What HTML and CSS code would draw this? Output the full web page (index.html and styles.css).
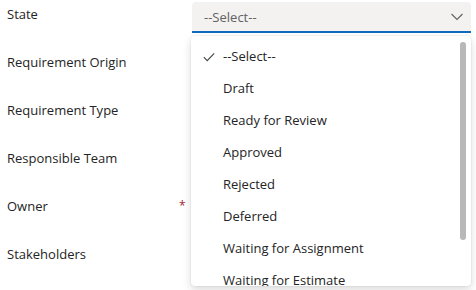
FILE: index.html
```html
<!DOCTYPE html>
<html>
<head>
    <title>Work item fields</title>
    <link rel="stylesheet" href="styles.css">
</head>
<body>
    <div class="form">
        <div class="row">
            <label class="label">State</label>
            <div class="field">
                <button class="select">
                    <span>--Select--</span>
                    <svg class="chevron" width="12" height="8" viewBox="0 0 12 8"><path d="M0.5 1 L6 6.5 L11.5 1" fill="none" stroke="#616161" stroke-width="1.1"/></svg>
                </button>
            </div>
        </div>
        <div class="row"><label class="label">Requirement Origin</label></div>
        <div class="row"><label class="label">Requirement Type</label></div>
        <div class="row"><label class="label">Responsible Team</label></div>
        <div class="row"><label class="label">Owner</label><span class="required">*</span></div>
        <div class="row"><label class="label">Stakeholders</label></div>

        <div class="listbox">
            <ul class="options">
                <li class="option selected">
                    <svg class="check" width="12" height="10" viewBox="0 0 12 10"><path d="M0.8 5.2 L4.2 8.6 L11.2 1.4" fill="none" stroke="#424242" stroke-width="1.1"/></svg>
                    --Select--
                </li>
                <li class="option">Draft</li>
                <li class="option">Ready for Review</li>
                <li class="option">Approved</li>
                <li class="option">Rejected</li>
                <li class="option">Deferred</li>
                <li class="option">Waiting for Assignment</li>
                <li class="option">Waiting for Estimate</li>
            </ul>
            <div class="scrollbar"></div>
        </div>
    </div>
</body>
</html>
```

FILE: styles.css
```css
body {
    font-family: "Segoe UI", "Open Sans", sans-serif;
    font-size: 13px;
    color: #242424;
    background: white;
    margin: 0;
    overflow: hidden;
}
.form {
    position: relative;
    padding: 2px 0 0 0;
}
.row {
    display: flex;
    align-items: flex-start;
    height: 48px;
}
.label {
    width: 172px;
    padding-left: 7px;
    line-height: 24px;
}
.required {
    color: #a4262c;
    line-height: 24px;
    font-size: 12px;
}
.field {
    margin-left: 13px;
}
.select {
    display: flex;
    align-items: center;
    justify-content: space-between;
    width: 279px;
    height: 31px;
    padding: 0 6px 0 12px;
    border: none;
    border-bottom: 2px solid #0f6cbd;
    border-radius: 4px 4px 0 0;
    background: #f3f2f1;
    font-family: inherit;
    font-size: 13px;
    color: #616161;
    box-sizing: border-box;
}
.chevron {
    margin-right: 2px;
}
.listbox {
    position: absolute;
    top: 36px;
    left: 191px;
    width: 280px;
    height: 250px;
    background: white;
    border-radius: 4px;
    box-shadow: 0 0 2px rgba(0,0,0,0.12), 0 4px 10px rgba(0,0,0,0.14);
    overflow: hidden;
}
.options {
    list-style: none;
    margin: 0;
    padding: 4px 0 0 0;
}
.option {
    display: flex;
    align-items: center;
    height: 32px;
    padding-left: 32px;
    position: relative;
}
.check {
    position: absolute;
    left: 12px;
    top: 12px;
}
.scrollbar {
    position: absolute;
    top: 6px;
    right: 5px;
    width: 6px;
    height: 198px;
    border-radius: 3px;
    background: #b8b8b8;
}
```
